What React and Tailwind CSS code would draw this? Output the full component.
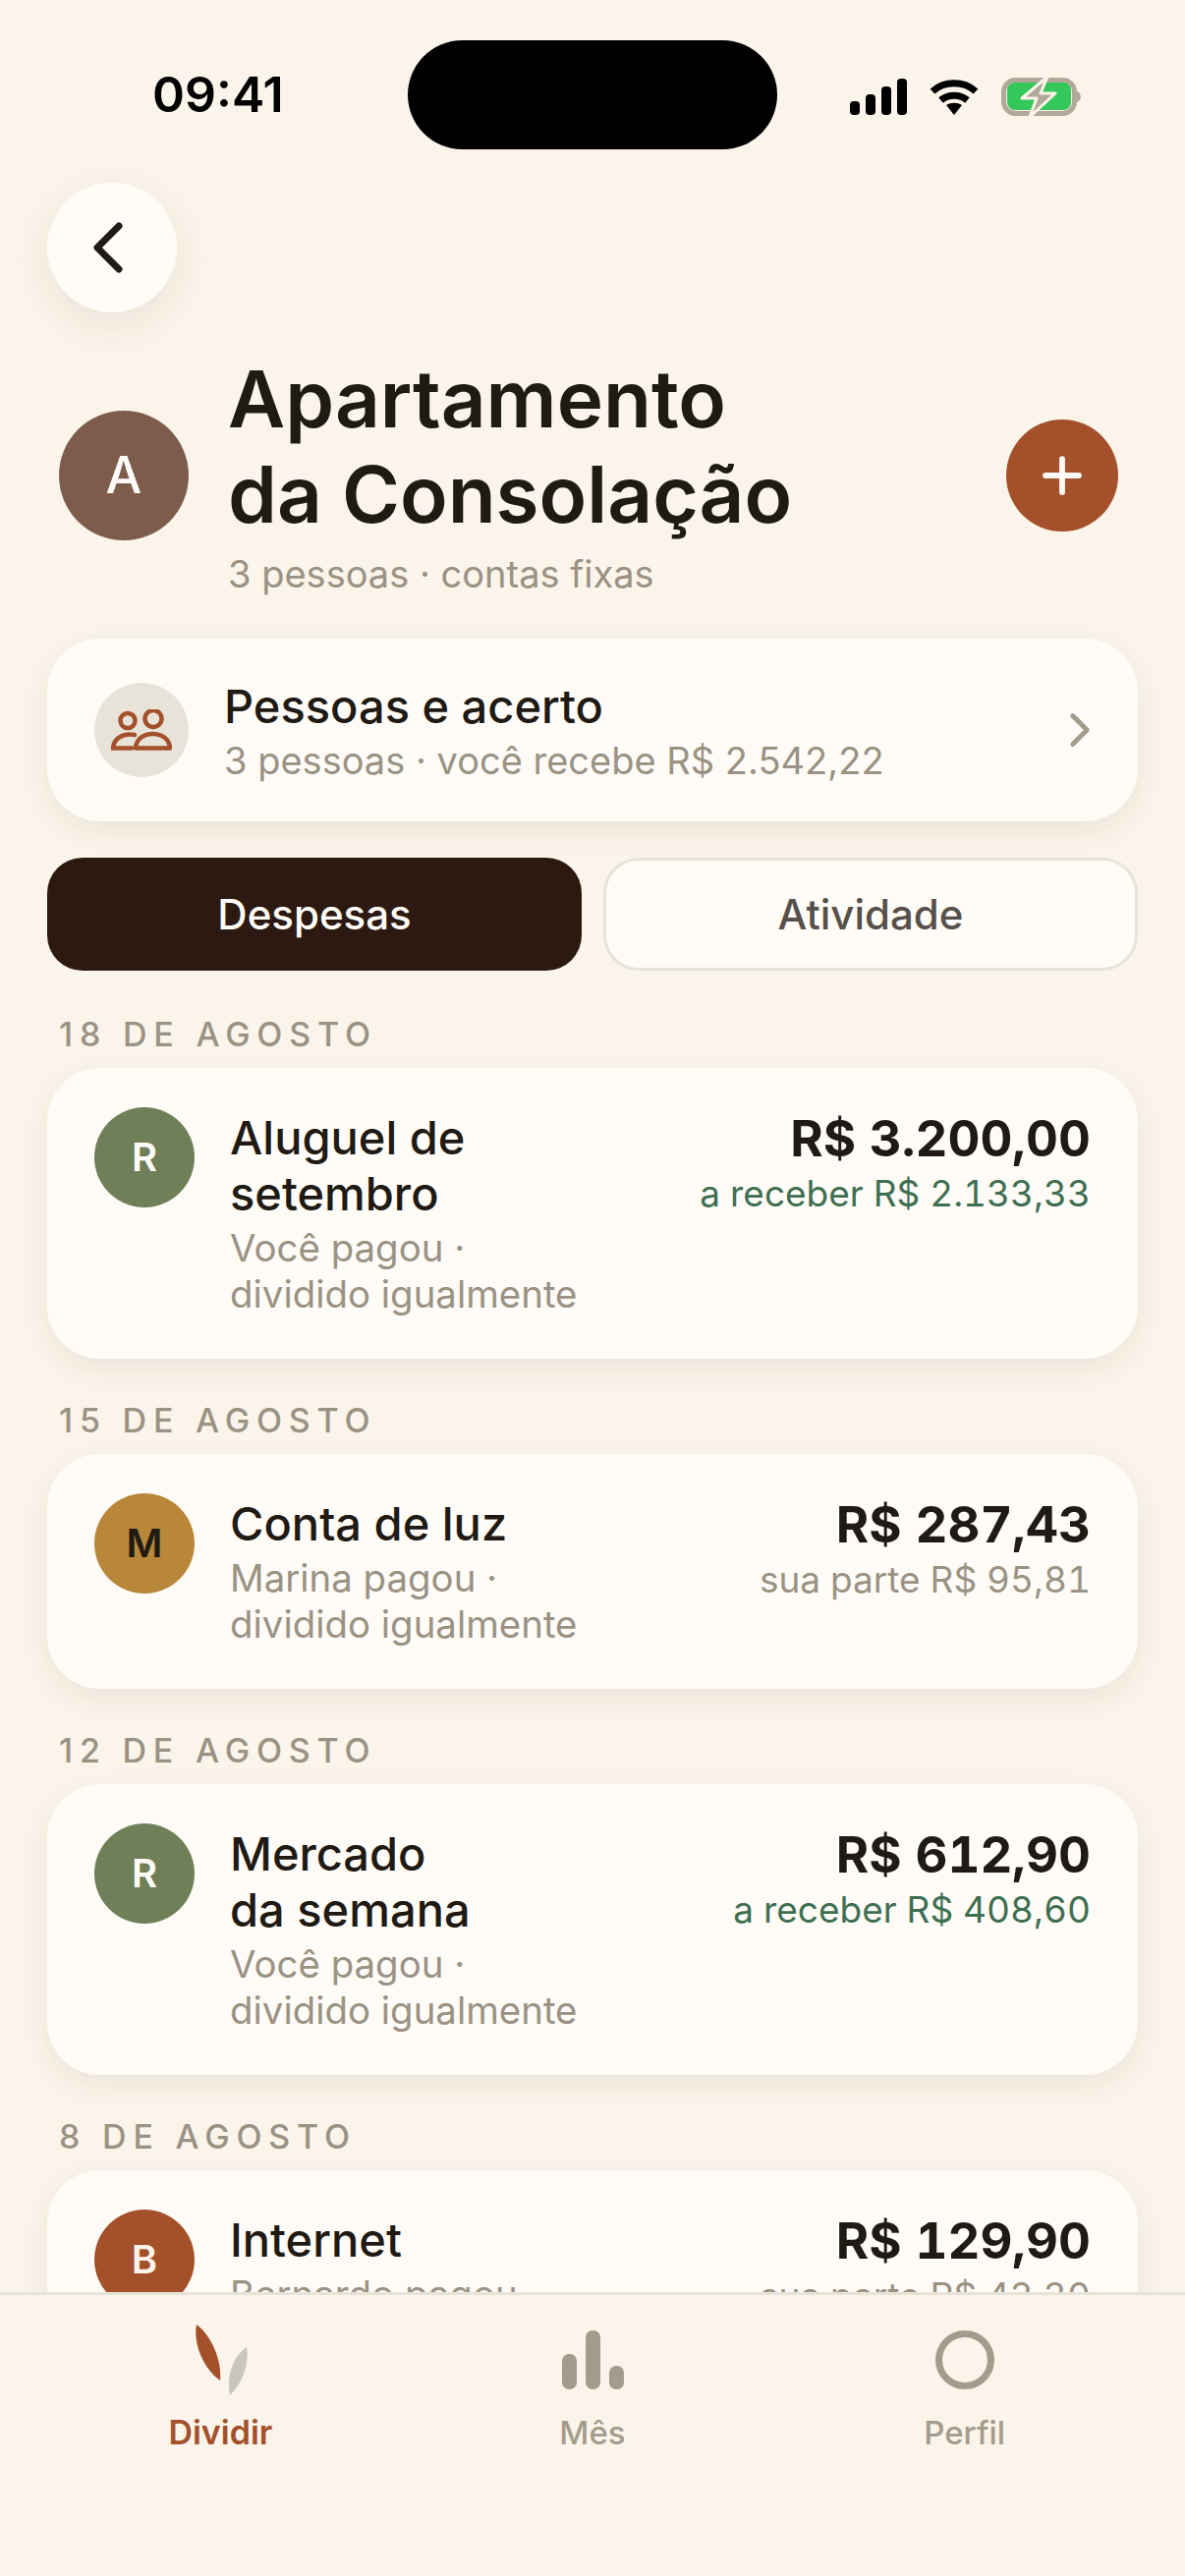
import { ChevronLeft, ChevronRight, Plus } from 'lucide-react';

const groups = [
  {
    date: '18 DE AGOSTO',
    initial: 'R',
    avatar: 'bg-[#6F7F58] text-[#FFFCF7]',
    title: ['Aluguel de', 'setembro'],
    sub: ['Você pagou ·', 'dividido igualmente'],
    amount: 'R$ 3.200,00',
    note: 'a receber R$ 2.133,33',
    noteColor: 'text-[#3F6F52]',
  },
  {
    date: '15 DE AGOSTO',
    initial: 'M',
    avatar: 'bg-[#B8873A] text-[#1F1A14]',
    title: ['Conta de luz'],
    sub: ['Marina pagou ·', 'dividido igualmente'],
    amount: 'R$ 287,43',
    note: 'sua parte R$ 95,81',
    noteColor: 'text-[#9A9284]',
  },
  {
    date: '12 DE AGOSTO',
    initial: 'R',
    avatar: 'bg-[#6F7F58] text-[#FFFCF7]',
    title: ['Mercado', 'da semana'],
    sub: ['Você pagou ·', 'dividido igualmente'],
    amount: 'R$ 612,90',
    note: 'a receber R$ 408,60',
    noteColor: 'text-[#3F6F52]',
  },
  {
    date: '8 DE AGOSTO',
    initial: 'B',
    avatar: 'bg-[#A3502B] text-[#FBF4EA]',
    title: ['Internet'],
    sub: ['Bernardo pagou ·', 'dividido igualmente'],
    amount: 'R$ 129,90',
    note: 'sua parte R$ 43,30',
    noteColor: 'text-[#9A9284]',
  },
];

function Signal() {
  return (
    <svg width="58" height="37" viewBox="0 0 58 37" fill="#000">
      <rect x="0" y="23" width="10" height="14" rx="4" />
      <rect x="16" y="16" width="10" height="21" rx="4" />
      <rect x="32" y="8" width="10" height="29" rx="4" />
      <rect x="48" y="0" width="10" height="37" rx="4" />
    </svg>
  );
}

function Wifi() {
  return (
    <svg width="50" height="37" viewBox="0 0 50 37" fill="none" stroke="#000" strokeWidth="7">
      <path d="M3 13C15 2 35 2 47 13" />
      <path d="M11.5 22C19 15.5 31 15.5 38.5 22" />
      <path d="M17 27L25 37L33 27C28 24 22 24 17 27Z" fill="#000" stroke="none" />
    </svg>
  );
}

function Battery() {
  return (
    <svg width="82" height="41" viewBox="0 0 82 41" fill="none">
      <rect x="2.5" y="3.5" width="72" height="34" rx="12" stroke="#B0A899" strokeWidth="5" />
      <rect x="6" y="6" width="65" height="28" rx="8" fill="#34C759" />
      <path d="M77 15C82 16 82 25 77 26Z" fill="#B0A899" />
      <path d="M47 0L21 22H36L29 41L55 17H40Z" fill="#B0A899" stroke="#FBF4EA" strokeWidth="3" strokeLinejoin="round" />
    </svg>
  );
}

function PeopleIcon() {
  return (
    <svg width="62" height="42" viewBox="0 0 62 42" fill="none" stroke="#A3502B" strokeWidth="4.5" strokeLinecap="round">
      <circle cx="17" cy="11.5" r="7.5" />
      <circle cx="43" cy="9.5" r="8.5" />
      <path d="M24 26C14 24 3 28 2 39.5H21" />
      <path d="M25 39.5C26 20 59 20 60 39.5Z" strokeLinejoin="round" />
    </svg>
  );
}

function Leaves() {
  return (
    <svg width="60" height="74" viewBox="0 0 60 74">
      <path d="M6 0C2 20 14 46 30 57C32 38 22 12 6 0Z" fill="#A3502B" />
      <path d="M57 23C44 32 36 50 40 72C52 60 60 42 57 23Z" fill="#C9C6BB" />
    </svg>
  );
}

function Bars() {
  return (
    <svg width="63" height="60" viewBox="0 0 63 60" fill="#A39C8D">
      <rect x="0" y="24" width="15" height="36" rx="7" />
      <rect x="24" y="0" width="15" height="60" rx="7" />
      <rect x="48" y="36" width="15" height="24" rx="7" />
    </svg>
  );
}

function ExpenseCard({ group }) {
  return (
    <div className="flex justify-between rounded-[54px] bg-[#FFFCF7] pl-[48px] pr-[48px] pt-[40px] pb-[42px] shadow-[0_10px_30px_rgba(70,50,25,0.08)]">
      <div className="flex gap-[36px]">
        <div className={`flex h-[102px] w-[102px] shrink-0 items-center justify-center rounded-full text-[40px] font-semibold ${group.avatar}`}>
          {group.initial}
        </div>
        <div className="pt-[2px]">
          <div className="text-[47px] font-medium leading-[57px] text-[#1F1A14]">
            {group.title.map((line) => <div key={line}>{line}</div>)}
          </div>
          <div className="mt-[4px] text-[38.4px] leading-[47px] text-[#9A9284]">
            {group.sub.map((line) => <div key={line}>{line}</div>)}
          </div>
        </div>
      </div>
      <div className="pt-[3px] text-right tabular-nums">
        <div className="text-[51px] font-bold leading-[57px] text-[#1F1A14]">{group.amount}</div>
        <div className={`text-[37px] leading-[55px] ${group.noteColor}`}>{group.note}</div>
      </div>
    </div>
  );
}

export default function App() {
  return (
    <div className="flex h-[2622px] w-[1206px] flex-col overflow-hidden bg-[#FBF4EA] font-['Inter',sans-serif]">
      <main className="h-[2333px] shrink-0 overflow-hidden">
        {/* status bar */}
        <div className="flex items-start pt-[41px] pl-[155px] pr-[105px]">
          <div className="w-[134px] pt-[25px] text-[50px] font-semibold leading-[60px] text-black">09:41</div>
          <div className="ml-[126px] h-[111px] w-[376px] rounded-full bg-black" />
          <div className="ml-auto flex items-center gap-[23px] pt-[37px]">
            <Signal />
            <Wifi />
            <Battery />
          </div>
        </div>

        <div className="px-[48px]">
          <button className="mt-[34px] flex h-[132px] w-[132px] items-center justify-center rounded-full bg-[#FFFCF7] shadow-[0_12px_40px_rgba(70,50,25,0.09)]">
            <ChevronLeft size={88} strokeWidth={1.9} color="#1F1A14" className="mr-[9px]" />
          </button>

          {/* group header */}
          <div className="mt-[39px] flex items-center justify-between pl-[12px] pr-[20px]">
            <div className="flex items-center gap-[40px]">
              <div className="mt-[3px] flex h-[132px] w-[132px] items-center justify-center rounded-full bg-[#7D5C4C] text-[52px] font-medium text-[#FFFCF7]">
                A
              </div>
              <div>
                <h1 className="text-[80px] font-semibold leading-[97px] text-[#1F1A14]">
                  Apartamento<br />da Consolação
                </h1>
                <p className="mt-[9px] text-[38px] leading-[48px] text-[#9A9284]">3 pessoas · contas fixas</p>
              </div>
            </div>
            <button className="mt-[3px] flex h-[114px] w-[114px] items-center justify-center rounded-full bg-[#A3502B]">
              <Plus size={58} strokeWidth={2.4} color="#FFFCF7" />
            </button>
          </div>

          {/* people card */}
          <div className="mt-[42px] flex h-[186px] items-center justify-between rounded-[54px] bg-[#FFFCF7] pl-[48px] pr-[30px] shadow-[0_10px_30px_rgba(70,50,25,0.08)]">
            <div className="flex items-center gap-[36px]">
              <div className="flex h-[96px] w-[96px] items-center justify-center rounded-full bg-[#E8E3D9]">
                <PeopleIcon />
              </div>
              <div className="mt-[5px]">
                <div className="text-[47px] font-medium leading-[56px] text-[#1F1A14]">Pessoas e acerto</div>
                <div className="text-[38px] leading-[54px] text-[#9A9284]">3 pessoas · você recebe R$ 2.542,22</div>
              </div>
            </div>
            <ChevronRight size={58} strokeWidth={2} color="#A39C8D" />
          </div>

          {/* tabs */}
          <div className="mt-[37px] flex gap-[22px]">
            <button className="h-[115px] w-[544px] rounded-[36px] bg-[#2C1A12] text-[42px] font-medium text-[#FFFCF7]">Despesas</button>
            <button className="h-[115px] flex-1 rounded-[36px] border-[3px] border-[#E8E3D9] bg-[#FFFCF7] text-[42px] font-medium text-[#57504A]">Atividade</button>
          </div>

          {/* expenses */}
          {groups.map((group, i) => (
            <section key={group.date} className={i === 0 ? 'mt-[44px]' : 'mt-[42px]'}>
              <div className="pl-[12px] text-[34px] font-medium leading-[42px] tracking-[6.8px] text-[#9A9284]">{group.date}</div>
              <div className="mt-[13px]">
                <ExpenseCard group={group} />
              </div>
            </section>
          ))}
        </div>
      </main>

      {/* tab bar */}
      <nav className="flex flex-1 items-start border-t-[3px] border-[#E8E3D9] px-[35px]">
        <div className="flex flex-1 flex-col items-center pt-[30px]">
          <Leaves />
          <div className="mt-[16px] text-[34px] font-semibold leading-[40px] text-[#A3502B]">Dividir</div>
        </div>
        <div className="flex flex-1 flex-col items-center pt-[36px]">
          <Bars />
          <div className="mt-[24px] text-[33px] font-medium leading-[40px] text-[#A39C8D]">Mês</div>
        </div>
        <div className="flex flex-1 flex-col items-center pt-[36px]">
          <div className="h-[60px] w-[60px] rounded-full border-[7px] border-[#A39C8D]" />
          <div className="mt-[24px] text-[33px] font-medium leading-[40px] text-[#A39C8D]">Perfil</div>
        </div>
      </nav>
    </div>
  );
}
